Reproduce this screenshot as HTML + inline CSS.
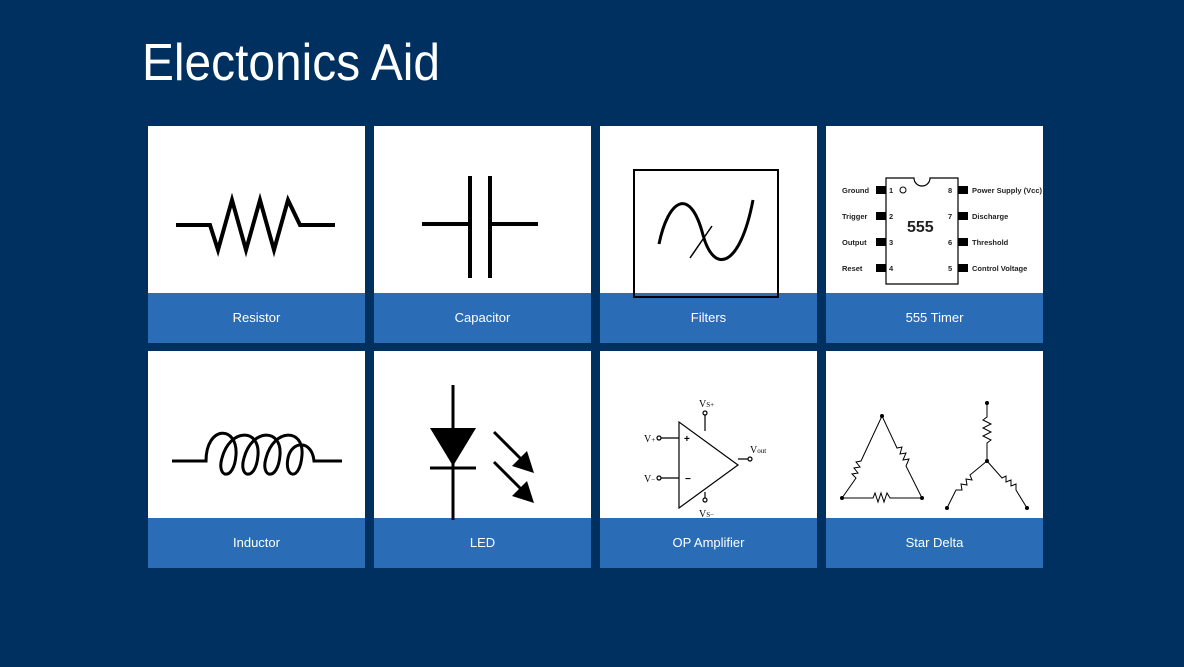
<!DOCTYPE html>
<html><head><meta charset="utf-8"><style>
html,body{margin:0;padding:0;}
body{width:1184px;height:667px;background:#003060;position:relative;overflow:hidden;font-family:"Liberation Sans",sans-serif;}
.t{position:absolute;width:217px;height:217px;background:#fff;}
.b{position:absolute;left:0;bottom:0;width:100%;height:50px;background:#2a6db6;color:#fff;font-size:13px;text-align:center;line-height:50px;}
svg.o{position:absolute;left:0;top:0;}
</style></head><body>
<div class="t" style="left:148px;top:126px"><div class="b">Resistor</div></div>
<div class="t" style="left:374px;top:126px"><div class="b">Capacitor</div></div>
<div class="t" style="left:600px;top:126px"><div class="b">Filters</div></div>
<div class="t" style="left:826px;top:126px"><div class="b">555 Timer</div></div>
<div class="t" style="left:148px;top:351px"><div class="b">Inductor</div></div>
<div class="t" style="left:374px;top:351px"><div class="b">LED</div></div>
<div class="t" style="left:600px;top:351px"><div class="b">OP Amplifier</div></div>
<div class="t" style="left:826px;top:351px"><div class="b">Star Delta</div></div>
<svg class="o" width="1184" height="667" viewBox="0 0 1184 667" font-family="Liberation Sans, sans-serif">
<text x="142" y="80" fill="#fff" font-size="52" font-weight="300" textLength="298" lengthAdjust="spacingAndGlyphs">Electonics Aid</text>
<g fill="none" stroke="#000" stroke-width="4" stroke-linejoin="miter">
<path d="M176 225H210L218 250L232 200L246 250L260 200L274 250L288 200L300 225H335"/>
<path d="M422 224H470M470 176V278M490 176V278M490 224H538"/>
</g>
<rect x="634" y="170" width="144" height="127" fill="none" stroke="#000" stroke-width="2"/>
<path d="M659 244C668 200 690 185 703 235C714 275 740 268 753 200" fill="none" stroke="#000" stroke-width="3"/>
<path d="M690 258L712 226" stroke="#000" stroke-width="1.5"/>
<!-- 555 -->
<path d="M886 178H914A8 8 0 0 0 930 178H958V284H886Z" fill="none" stroke="#000" stroke-width="1.2"/>
<circle cx="903" cy="190" r="3" fill="none" stroke="#000"/>
<g fill="#000">
<rect x="876" y="186" width="10" height="8"/><rect x="876" y="212" width="10" height="8"/><rect x="876" y="238" width="10" height="8"/><rect x="876" y="264" width="10" height="8"/>
<rect x="958" y="186" width="10" height="8"/><rect x="958" y="212" width="10" height="8"/><rect x="958" y="238" width="10" height="8"/><rect x="958" y="264" width="10" height="8"/>
</g>
<g font-size="7.5" font-weight="bold" fill="#222">
<text x="842" y="193">Ground</text><text x="842" y="219">Trigger</text><text x="842" y="245">Output</text><text x="842" y="271">Reset</text>
<text x="889" y="193">1</text><text x="889" y="219">2</text><text x="889" y="245">3</text><text x="889" y="271">4</text>
<text x="948" y="193">8</text><text x="948" y="219">7</text><text x="948" y="245">6</text><text x="948" y="271">5</text>
<text x="972" y="193">Power Supply (Vcc)</text><text x="972" y="219">Discharge</text><text x="972" y="245">Threshold</text><text x="972" y="271">Control Voltage</text>
<text x="907" y="232" font-size="16">555</text>
</g>
<!-- inductor -->
<path d="M172 461H206C206 425 238 425 236 455C234 482 216 478 222 458C230 428 260 428 258 455C256 482 238 478 244 458C252 428 282 428 280 455C278 482 260 478 266 458C274 428 304 428 302 455C300 482 284 478 288 458C292 440 312 440 314 461H342" fill="none" stroke="#000" stroke-width="3"/>
<!-- LED -->
<path d="M453 385V520" stroke="#000" stroke-width="3"/>
<path d="M430 428H476L453 466Z" fill="#000"/>
<path d="M430 468H476" stroke="#000" stroke-width="3"/>
<g stroke="#000" stroke-width="3"><path d="M494 432L524 462"/><path d="M494 462L524 492"/></g>
<path d="M534 473L512 466L527 451Z" fill="#000"/><path d="M534 503L512 496L527 481Z" fill="#000"/>
<!-- op amp -->
<g fill="none" stroke="#000" stroke-width="1.2">
<path d="M679 422V508L738 465Z"/>
<path d="M661 438H679M661 478H679M738 459H748M705 415V431M705 492V498"/>
<circle cx="659" cy="438" r="2"/><circle cx="659" cy="478" r="2"/><circle cx="750" cy="459" r="2"/><circle cx="705" cy="413" r="2"/><circle cx="705" cy="500" r="2"/>
</g>
<g font-family="Liberation Serif, serif" font-size="10" fill="#000">
<text x="644" y="442">V<tspan font-size="7">+</tspan></text><text x="644" y="482">V<tspan font-size="7">−</tspan></text>
<text x="750" y="453">V<tspan font-size="7">out</tspan></text><text x="699" y="407">V<tspan font-size="7">S+</tspan></text><text x="699" y="517">V<tspan font-size="7">S−</tspan></text>
<text x="684" y="442" font-family="Liberation Sans" font-weight="bold">+</text><text x="685" y="482" font-family="Liberation Sans" font-weight="bold">−</text>
</g>
<!-- star delta -->
<g fill="none" stroke="#000" stroke-width="1">
<path d="M882 416L861 461L856 462L860 467L854 468L858 473L852 474L856 478L842 498"/>
<path d="M882 416L897 448L902 447L900 454L906 453L903 460L909 459L906 466L922 498"/>
<path d="M842 498H873L875 493L878 502L881 493L884 502L887 493L890 498H922"/>
<path d="M987 403V417L983 420L991 424L983 428L991 432L983 436L991 440L987 443V461"/>
<path d="M987 461L970 475L972 480L966 479L967 485L961 484L962 490L956 490L947 508"/>
<path d="M987 461L1002 478L1006 476L1006 482L1011 480L1011 486L1016 484L1016 490L1027 508"/>
</g>
<g fill="#000"><circle cx="882" cy="416" r="2"/><circle cx="842" cy="498" r="2"/><circle cx="922" cy="498" r="2"/><circle cx="987" cy="403" r="2"/><circle cx="987" cy="461" r="2"/><circle cx="947" cy="508" r="2"/><circle cx="1027" cy="508" r="2"/></g>
</svg>
</body></html>
